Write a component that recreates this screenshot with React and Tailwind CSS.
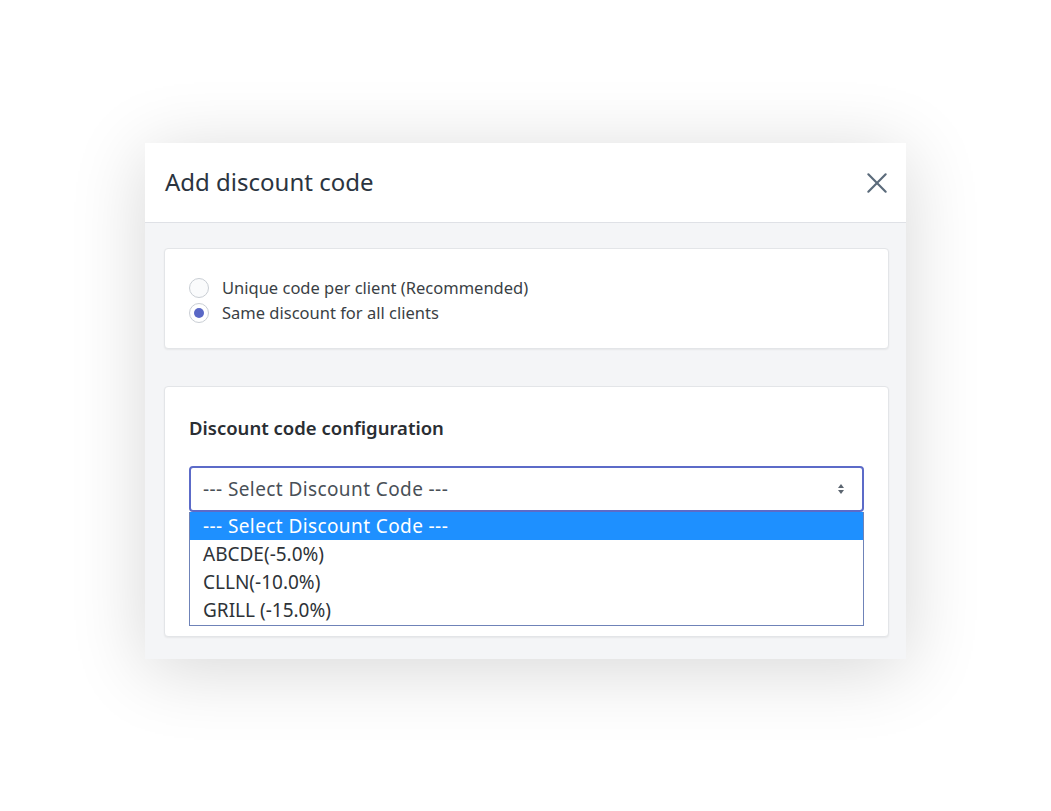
import React from "react";

export default function App() {
  const font = { fontFamily: '"Segoe UI", "Noto Sans", "Open Sans", sans-serif' };
  return (
    <div className="w-[1051px] h-[811px] bg-white flex flex-col items-center pt-[143px]" style={font}>
      <div className="w-[761px] bg-[#f4f5f7] shadow-[0_10px_70px_rgba(0,0,0,0.16)] flex flex-col">
        <div className="h-[80px] bg-white border-b border-[#dfe1e6] flex items-center justify-between pl-[20px] pr-[16px]">
          <div className="text-[24px] text-[#2b3440] font-normal -mt-[2px]">Add discount code</div>
          <svg width="26" height="26" viewBox="0 0 24 24" fill="none" stroke="#5b6b7b" strokeWidth="2" strokeLinecap="round">
            <path d="M4 4L20 20M20 4L4 20" />
          </svg>
        </div>
        <div className="pl-[19px] pr-[17px] pt-[25px] pb-[22px] flex flex-col gap-[37px]">
          <div className="h-[101px] bg-white rounded-[4px] border border-[#e3e5e8] shadow-[0_1px_2px_rgba(0,0,0,0.06)] flex flex-col pl-[24px] pt-[29px] gap-[5px]">
            <label className="flex items-center gap-[13px] h-[20px] text-[16.5px] text-[#3a3f45]">
              <span className="w-[20px] h-[20px] rounded-full border border-[#c9ced4] bg-[#fafbfc]" />
              Unique code per client (Recommended)
            </label>
            <label className="flex items-center gap-[13px] h-[20px] text-[16.5px] text-[#3a3f45]">
              <span className="w-[20px] h-[20px] rounded-full border border-[#c9ced4] bg-white flex items-center justify-center">
                <span className="w-[10px] h-[10px] rounded-full bg-[#5a68c6]" />
              </span>
              Same discount for all clients
            </label>
          </div>
          <div className="h-[251px] bg-white rounded-[4px] border border-[#e3e5e8] shadow-[0_1px_2px_rgba(0,0,0,0.06)] flex flex-col pl-[24px] pr-[24px] pt-[28px]">
            <div className="text-[18.5px] font-semibold text-[#2a2e33] leading-[26px]">Discount code configuration</div>
            <div className="mt-[25px] relative w-[675px]">
              <div className="h-[46px] border-2 border-[#5c6bc8] rounded-[4px] flex items-center justify-between pl-[12px] pr-[17px] text-[19px] text-[#495057]">
                <span className="tracking-[0.4px]">--- Select Discount Code ---</span>
                <svg width="8" height="14" viewBox="0 0 8 14" fill="#5b6570">
                  <path d="M4 2L7 6H1Z" />
                  <path d="M4 12L7 8H1Z" />
                </svg>
              </div>
              <div className="w-[675px] border border-[#6f83b8] border-t-0 bg-white flex flex-col text-[19px] leading-[28px] pb-[1px]">
                <div className="bg-[#1e90ff] text-white pl-[13px] h-[28px] tracking-[0.4px]">--- Select Discount Code ---</div>
                <div className="text-[#2e3338] pl-[13px] h-[28px]">ABCDE(-5.0%)</div>
                <div className="text-[#2e3338] pl-[13px] h-[28px]">CLLN(-10.0%)</div>
                <div className="text-[#2e3338] pl-[13px] h-[28px]">GRILL (-15.0%)</div>
              </div>
            </div>
          </div>
        </div>
      </div>
    </div>
  );
}
